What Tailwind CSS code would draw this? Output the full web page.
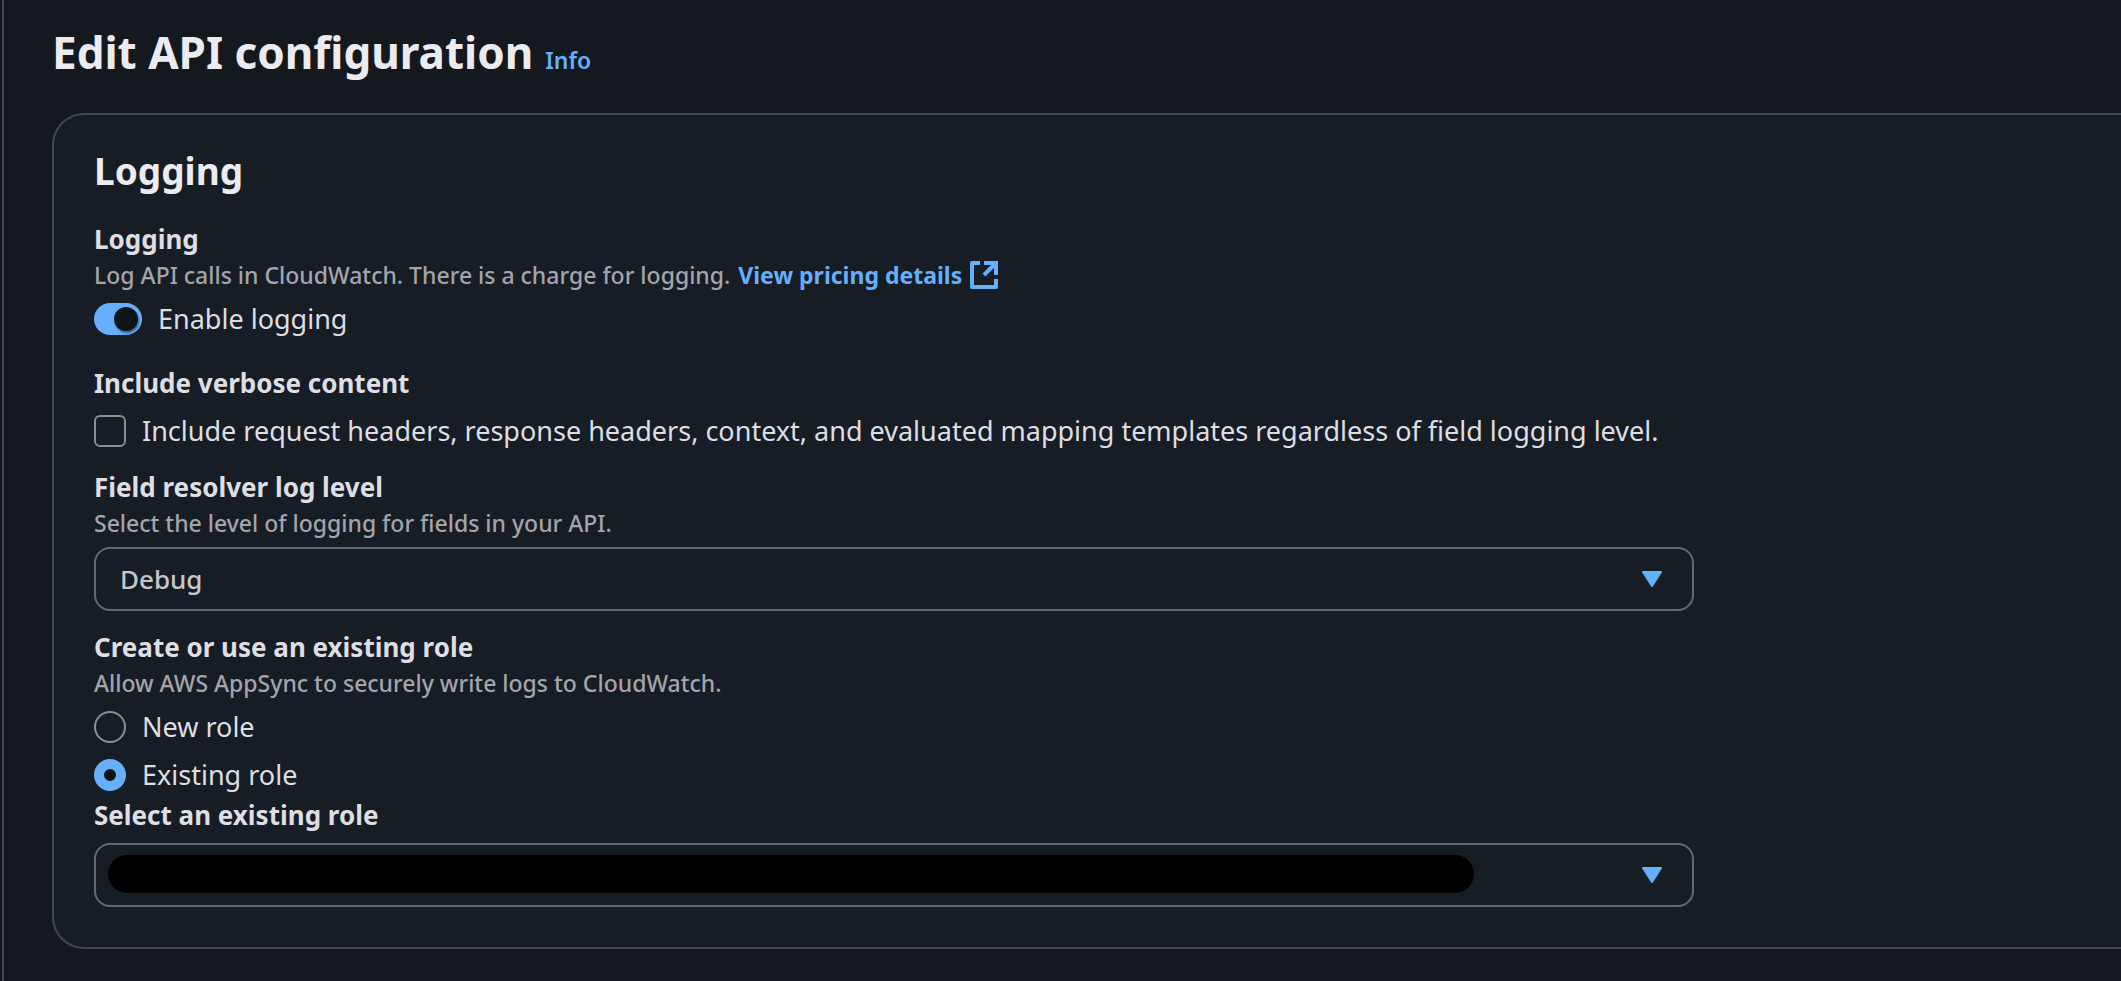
<!DOCTYPE html>
<html lang="en">
<head>
<meta charset="utf-8">
<meta name="viewport" content="width=device-width, initial-scale=1">
<title>Edit API configuration</title>
<script src="https://cdn.jsdelivr.net/npm/@tailwindcss/browser@4"></script>
</head>
<body class="bg-[#14181f] font-['Noto_Sans',sans-serif] text-[26px] leading-10 text-[#dedee3]">
<main class="ml-0.5 min-h-screen border-l-2 border-[#424650] pl-12 pt-[22px] pb-8">
  <header class="flex items-baseline gap-3">
    <h1 class="text-[44px] leading-[60px] font-bold text-[#ebebf0]">Edit API configuration</h1>
    <a href="#info" class="text-[23px] leading-8 font-semibold text-[#65b0fb]">Info</a>
  </header>

  <form class="mt-[31px] rounded-l-[32px] border-2 border-r-0 border-[#424650] bg-[#171d25] px-10 pt-8 pb-10">
    <h2 class="mb-6 text-[37px] leading-[48px] font-bold text-[#ebebf0]">Logging</h2>

    <div class="max-w-[1600px]">
      <section>
        <h3 class="font-bold">Logging</h3>
        <p class="flex items-center gap-2 text-[23px] leading-8 font-medium text-[#a4a4ad]">
          <span>Log API calls in CloudWatch. There is a charge for logging.</span>
          <a href="#pricing" class="flex items-center gap-2 font-bold text-[#65b0fb]">View pricing details
            <svg class="size-7" viewBox="0 0 28 28" fill="none" stroke="currentColor" stroke-width="4" aria-hidden="true">
              <path d="M10 2H2v24h24v-8" stroke-linejoin="round"/>
              <path d="M14 2h12v12M26 2 14 14"/>
            </svg>
          </a>
        </p>
        <label class="mt-2 flex items-center gap-4 text-[27px]">
          <input type="checkbox" role="switch" checked class="flex h-8 w-12 appearance-none items-center rounded-full bg-[#65b0fb] pl-5 before:size-6 before:rounded-full before:bg-[#0f141a] before:shadow-[1px_2px_2px_rgba(15,20,26,0.5)]">
          Enable logging
        </label>
      </section>

      <section class="mt-6">
        <h3 class="font-bold">Include verbose content</h3>
        <label class="mt-2 flex items-center gap-4 text-[27px]">
          <input type="checkbox" class="size-8 shrink-0 appearance-none rounded-md border-2 border-[#8c8c94]">
          Include request headers, response headers, context, and evaluated mapping templates regardless of field logging level.
        </label>
      </section>

      <section class="mt-4">
        <label for="level" class="block font-bold">Field resolver log level</label>
        <p class="text-[23px] leading-8 font-medium text-[#a4a4ad]">Select the level of logging for fields in your API.</p>
        <div class="relative mt-2">
          <select id="level" class="block h-16 w-full appearance-none rounded-2xl border-2 border-[#656871] bg-transparent px-6 text-[26px] font-medium text-[#c6c6cd]">
            <option>Debug</option>
          </select>
          <svg class="pointer-events-none absolute top-6 right-8 h-4 w-5 text-[#65b0fb]" viewBox="0 0 20 16" fill="currentColor" stroke="currentColor" stroke-width="2" stroke-linejoin="round" aria-hidden="true"><path d="M1 1h18l-9 14z"/></svg>
        </div>
      </section>

      <fieldset class="mt-4">
        <legend class="font-bold">Create or use an existing role</legend>
        <p class="text-[23px] leading-8 font-medium text-[#a4a4ad]">Allow AWS AppSync to securely write logs to CloudWatch.</p>
        <label class="mt-2 flex items-center gap-4 text-[27px]">
          <input type="radio" name="role" class="size-8 appearance-none rounded-full border-2 border-[#8c8c94] checked:border-[10px] checked:border-[#65b0fb] checked:bg-[#0f141a]">
          New role
        </label>
        <label class="mt-2 flex items-center gap-4 text-[27px]">
          <input type="radio" name="role" checked class="size-8 appearance-none rounded-full border-2 border-[#8c8c94] checked:border-[10px] checked:border-[#65b0fb] checked:bg-[#0f141a]">
          Existing role
        </label>
      </fieldset>

      <section>
        <label for="existing" class="block font-bold">Select an existing role</label>
        <div class="relative mt-2">
          <select id="existing" class="block h-16 w-full appearance-none rounded-2xl border-2 border-[#656871] bg-transparent px-6 text-[26px] font-medium text-[#c6c6cd]">
            <option></option>
          </select>
          <div class="pointer-events-none absolute top-3 right-[220px] left-3.5 h-[38px] rounded-full bg-black"></div>
          <svg class="pointer-events-none absolute top-6 right-8 h-4 w-5 text-[#65b0fb]" viewBox="0 0 20 16" fill="currentColor" stroke="currentColor" stroke-width="2" stroke-linejoin="round" aria-hidden="true"><path d="M1 1h18l-9 14z"/></svg>
        </div>
      </section>
    </div>
  </form>
</main>
</body>
</html>
